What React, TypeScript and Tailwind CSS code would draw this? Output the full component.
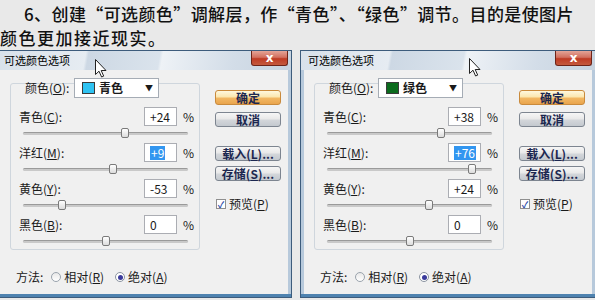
import React from 'react'

type Row = { label: string; key: string; value: string; selected?: boolean }

type DialogProps = {
  swatch: string
  colorName: string
  rows: Row[]
  cursorX: number
  cursorY: number
}

const Mn = ({ c }: { c: string }) => <span className="underline underline-offset-1">{c}</span>

const Cursor = ({ x, y }: { x: number; y: number }) => (
  <svg
    width="12"
    height="19"
    viewBox="0 0 12 19"
    className="absolute"
    style={{ left: x, top: y }}
  >
    <path d="M0.5 0.5 L0.5 15.5 L4 12.2 L6.6 18 L8.7 17.1 L6.2 11.5 L11 11.5 Z" fill="#fff" stroke="#222" strokeWidth="1" strokeLinejoin="round" />
  </svg>
)

// value -100..100 mapped onto the track
const thumbLeft = (v: string) => {
  const n = parseInt(v, 10) || 0
  return 82.5 + (n / 100) * 82.5 - 4
}

const SliderRow = ({ row }: { row: Row }) => (
  <div className="flex flex-col h-[36px] shrink-0">
    <div className="flex items-center h-[19px]">
      <span className="ml-[8px] w-[125px]">
        {row.label}(<Mn c={row.key} />):
      </span>
      <div className="w-[33px] h-[19px] border border-[#abadb3] bg-white flex items-center pl-[5px]">
        {row.selected ? (
          <span className="bg-[#3296f0] text-white leading-[14px] px-[1px]">{row.value}</span>
        ) : (
          <span>{row.value}</span>
        )}
      </div>
      <span className="ml-[6px]">%</span>
    </div>
    <div className="relative ml-[12px] mt-[2px] w-[165px] h-[10px] flex items-center">
      <div className="w-full h-[3px] rounded-full bg-[#c9c9c9] border-t border-[#9a9a9a]" />
      <div
        className="absolute top-0 w-[8px] h-[10px] rounded-[2px] border border-[#7a7a7a] bg-[linear-gradient(#ffffff,#dcdcdc)]"
        style={{ left: thumbLeft(row.value) }}
      />
    </div>
  </div>
)

const Btn = ({ children, primary, className = '' }: { children: React.ReactNode; primary?: boolean; className?: string }) => (
  <div
    className={`w-[66px] h-[15px] rounded-[3px] border flex items-center justify-center text-[12px] leading-none font-bold text-[#1c2750] ${
      primary
        ? 'border-[#c98a3c] bg-[linear-gradient(#fff8de_0%,#fbe7b0_45%,#f2b864_55%,#e9a44c_100%)]'
        : 'border-[#7d8590] bg-[linear-gradient(#f6f6f6_0%,#e9e9e9_45%,#d3d6da_55%,#c4c9cf_100%)]'
    } ${className}`}
  >
    {children}
  </div>
)

const Dialog = ({ swatch, colorName, rows, cursorX, cursorY }: DialogProps) => (
  <div className="relative w-[296px] h-[248px] shrink-0 border border-[#3d5c7c] bg-[#b7c9db] flex flex-col">
    {/* title bar */}
    <div className="h-[19px] flex items-start bg-[linear-gradient(100deg,#d8e1ea_0%,#e6ecf2_30%,#cdd8e4_31%,#dae3ec_55%,#eef2f6_56%,#d3dde8_80%,#c7d3df_100%)]">
      <span className="ml-[7px] mt-[3px] text-[11px] leading-[13px] text-black">可选颜色选项</span>
      <div className="ml-auto mr-[3px] w-[37px] h-[15px] rounded-b-[3px] border border-t-0 border-[#6e2418] bg-[linear-gradient(#e4a497_0%,#d2705f_45%,#bf3b24_55%,#c45a3e_100%)] flex items-center justify-center">
        <span className="text-white font-bold text-[12px] leading-none font-['DejaVu_Sans',sans-serif]">x</span>
      </div>
    </div>

    {/* client */}
    <div className="mx-[3px] h-[224px] bg-[#f0f0f0] text-[12px] leading-[14px] text-[#1a1a1a] flex">
      <div className="flex flex-col">
        <div className="relative ml-[10px] mt-[13px] w-[190px] h-[167px] rounded-[3px] border border-[#cfd6dd] flex flex-col">
          {/* color select straddles the frame */}
          <div className="-mt-[6px] flex items-center h-[20px]">
            <span className="ml-[14px] w-[49px]">
              颜色(<Mn c="O" />):
            </span>
            <div className="w-[85px] h-[20px] border border-[#a5acb5] bg-white flex items-center pl-[7px]">
              <div className="w-[13px] h-[12px] border border-[#3a3a3a]" style={{ background: swatch }} />
              <span className="ml-[4px] font-bold">{colorName}</span>
              <span className="ml-auto mr-[5px] text-[8px] leading-none">▼</span>
            </div>
          </div>
          <div className="mt-[9px] flex flex-col">
            {rows.map((r) => (
              <SliderRow key={r.key} row={r} />
            ))}
          </div>
        </div>

        <div className="mt-[20px] ml-[16px] flex items-center h-[14px]">
          <span>方法:</span>
          <div className="ml-[8px] w-[10px] h-[10px] rounded-full border border-[#9aa3ad] bg-[linear-gradient(#e8e8e8,#ffffff)]" />
          <span className="ml-[3px]">
            相对(<Mn c="R" />)
          </span>
          <div className="ml-[11px] w-[10px] h-[10px] rounded-full border border-[#8a93a0] bg-white flex items-center justify-center">
            <div className="w-[5px] h-[5px] rounded-full bg-[#3a3a9c]" />
          </div>
          <span className="ml-[3px]">
            绝对(<Mn c="A" />)
          </span>
        </div>
      </div>

      <div className="ml-[15px] flex flex-col">
        <Btn primary className="mt-[20px]">确定</Btn>
        <Btn className="mt-[7px]">取消</Btn>
        <Btn className="mt-[19px]">
          载入(<Mn c="L" />)...
        </Btn>
        <Btn className="mt-[5px]">
          存储(<Mn c="S" />)...
        </Btn>
        <div className="mt-[16px] ml-[1px] flex items-center">
          <div className="w-[10px] h-[10px] border border-[#8f8f8f] bg-white flex items-center justify-center text-[#2a4aa8] text-[9px] leading-none font-bold">✓</div>
          <span className="ml-[3px]">
            预览(<Mn c="P" />)
          </span>
        </div>
      </div>
    </div>
    <div className="flex-1 bg-[#4f83b0]" />

    <Cursor x={cursorX} y={cursorY} />
  </div>
)

export default function App() {
  return (
    <div className="w-[595px] h-[300px] overflow-hidden bg-[#e9e9e9] font-['Noto_Sans_CJK_SC',sans-serif]">
      <div className="h-[50px] pt-[2px] text-[17px] leading-[24px] font-medium text-[#111]">
        <p className="pl-[24px] tracking-[0.4px] whitespace-nowrap">6、创建“可选颜色”调解层，作“青色”、“绿色”调节。目的是使图片</p>
        <p className="tracking-[1.5px]">颜色更加接近现实。</p>
      </div>
      <div className="flex gap-[8px] -ml-[4px]">
        <Dialog
          swatch="#2fc3f2"
          colorName="青色"
          cursorX={98}
          cursorY={8}
          rows={[
            { label: '青色', key: 'C', value: '+24' },
            { label: '洋红', key: 'M', value: '+9', selected: true },
            { label: '黄色', key: 'Y', value: '-53' },
            { label: '黑色', key: 'B', value: '0' },
          ]}
        />
        <Dialog
          swatch="#0b6b1d"
          colorName="绿色"
          cursorX={168}
          cursorY={7}
          rows={[
            { label: '青色', key: 'C', value: '+38' },
            { label: '洋红', key: 'M', value: '+76', selected: true },
            { label: '黄色', key: 'Y', value: '+24' },
            { label: '黑色', key: 'B', value: '0' },
          ]}
        />
      </div>
    </div>
  )
}
